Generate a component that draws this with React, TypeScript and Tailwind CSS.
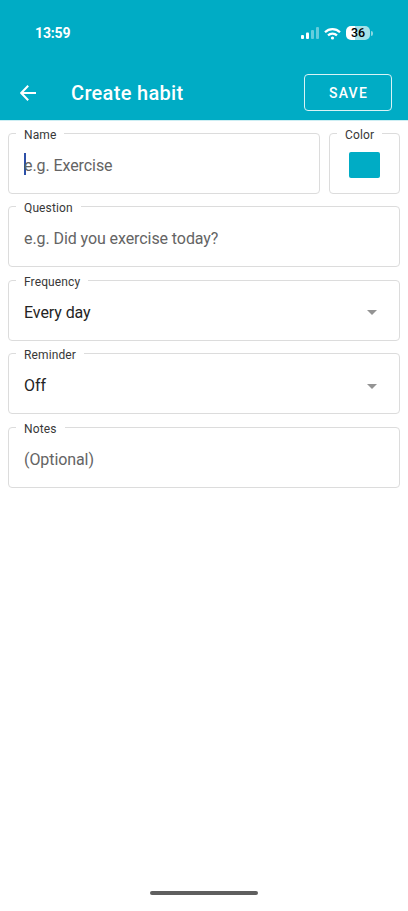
import type { ReactNode } from "react";
import clsx from "clsx";

type FieldProps = {
  label: string;
  className?: string;
  children: ReactNode;
};

const Field = ({ label, className, children }: FieldProps) => (
  <div
    className={clsx(
      "relative flex h-[61px] items-center rounded-[4px] border border-[#dcdcdc] px-[15px]",
      className
    )}
  >
    <span className="absolute -top-[7px] left-[7px] bg-white px-2 text-[12px] leading-4 tracking-[0.12px] whitespace-nowrap text-[#383838]">
      {label}
    </span>
    {children}
  </div>
);

const Hint = ({ text }: { text: string }) => (
  <span className="pt-[5px] text-[16px] leading-6 tracking-[-0.08px] text-[#646464]">
    {text}
  </span>
);

const Dropdown = ({ value }: { value: string }) => (
  <div className="flex w-full items-center justify-between pt-[5px] pr-[7px]">
    <span className="text-[16px] leading-6 tracking-[-0.08px] text-[#242424]">
      {value}
    </span>
    <svg width="10" height="5" viewBox="0 0 10 5" fill="#949494">
      <path d="M0 0h10L5 5z" />
    </svg>
  </div>
);

const StatusBar = () => (
  <div className="flex h-[65px] items-center justify-between pt-px pr-[35px] pl-[35px]">
    <span className="text-[14px] leading-5 font-bold tracking-[-0.15px]">
      13:59
    </span>
    <div className="flex items-center gap-[5px]">
      <svg width="18" height="12" viewBox="0 0 18 12" fill="white">
        <rect x="0" y="8" width="3" height="4" rx="1" />
        <rect x="5" y="5.5" width="3" height="6.5" rx="1" />
        <rect x="10" y="3" width="3" height="9" rx="1" opacity="0.4" />
        <rect x="15" y="0" width="3" height="12" rx="1" opacity="0.4" />
      </svg>
      <svg
        width="17"
        height="13"
        viewBox="0 0 17 13"
        fill="none"
        stroke="white"
        strokeWidth="2.2"
      >
        <path d="M1 5.2a10.7 10.7 0 0 1 15 0" />
        <path d="M4 8.4a6.5 6.5 0 0 1 9 0" />
        <circle cx="8.5" cy="11" r="1.6" fill="white" stroke="none" />
      </svg>
      <div className="flex items-center gap-px">
        <div className="flex h-[14px] w-[24px] items-center justify-center rounded-[5px] bg-linear-to-r from-white from-36% to-[#a5e1e8] to-36% text-[12.5px] leading-none font-medium text-black">
          36
        </div>
        <div className="h-[5px] w-[2px] rounded-r-full bg-[#8ad7e1]" />
      </div>
    </div>
  </div>
);

const Toolbar = () => (
  <div className="flex h-[55px] items-center pr-4 pl-5">
    <svg
      width="16"
      height="16"
      viewBox="0 0 16 16"
      fill="none"
      stroke="white"
      strokeWidth="2"
    >
      <path d="M16 8H1.5M8.2 .8 1.2 8l7 7.2" />
    </svg>
    <h1 className="ml-[35px] flex-1 pt-px text-[20px] leading-6 font-medium tracking-[0.32px]">
      Create habit
    </h1>
    <button className="h-[37px] w-[88px] rounded-[4px] border border-[#d9f3f6] pl-px pt-px text-[14px] leading-5 font-medium tracking-[1.25px]">
      SAVE
    </button>
  </div>
);

const App = () => (
  <div className="flex h-[911px] w-[408px] flex-col bg-white font-[Roboto,sans-serif]">
    <header className="h-[121px] border-b border-[#cdeef3] bg-[#00acc5] text-white">
      <StatusBar />
      <Toolbar />
    </header>
    <main className="flex flex-1 flex-col gap-[12.5px] px-2 pt-[11.5px]">
      <div className="flex gap-[9px]">
        <Field label="Name" className="flex-1">
          <span className="mt-[2px] -mr-[2px] h-[22px] w-[2px] bg-[#2d50a8]" />
          <Hint text="e.g. Exercise" />
        </Field>
        <Field label="Color" className="w-[71px] justify-center">
          <div className="mt-[3px] h-[26px] w-[31px] rounded-[2px] bg-[#00acc5]" />
        </Field>
      </div>
      <Field label="Question">
        <Hint text="e.g. Did you exercise today?" />
      </Field>
      <Field label="Frequency">
        <Dropdown value="Every day" />
      </Field>
      <Field label="Reminder">
        <Dropdown value="Off" />
      </Field>
      <Field label="Notes">
        <Hint text="(Optional)" />
      </Field>
    </main>
    <div className="mx-auto mb-4 h-[4px] w-[108px] rounded-full bg-[#5f5f5f]" />
  </div>
);

export default App;
